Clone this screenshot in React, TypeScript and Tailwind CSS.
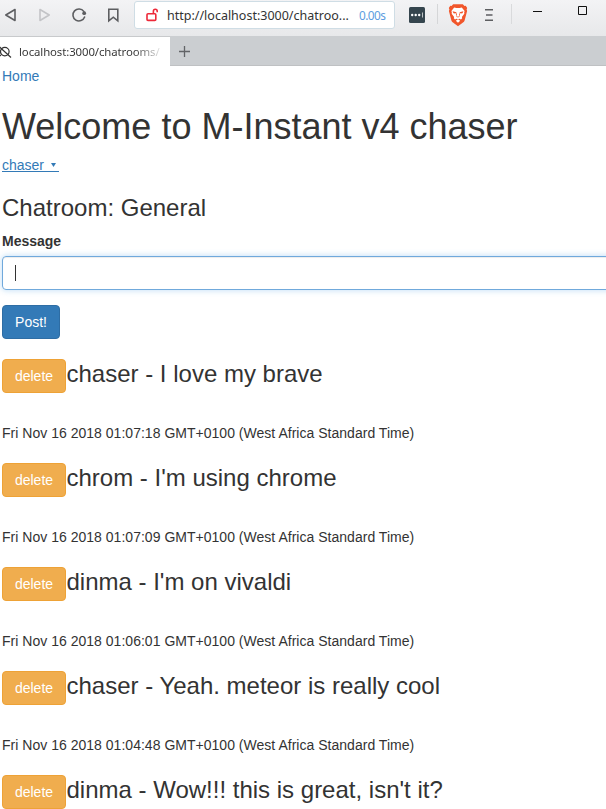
import React from "react";

const messages = [
  { text: "chaser - I love my brave", date: "Fri Nov 16 2018 01:07:18 GMT+0100 (West Africa Standard Time)" },
  { text: "chrom - I'm using chrome", date: "Fri Nov 16 2018 01:07:09 GMT+0100 (West Africa Standard Time)" },
  { text: "dinma - I'm on vivaldi", date: "Fri Nov 16 2018 01:06:01 GMT+0100 (West Africa Standard Time)" },
  { text: "chaser - Yeah. meteor is really cool", date: "Fri Nov 16 2018 01:04:48 GMT+0100 (West Africa Standard Time)" },
  { text: "dinma - Wow!!! this is great, isn't it?", date: "" },
];

function BraveLion() {
  return (
    <svg className="ml-[10px] mt-[3px] h-6 w-5 shrink-0" viewBox="0 0 20 24">
      <path
        d="M5.2 1.2h9.6l1.7 1.7 1.2-.1 1.5 2.1-.6 1.5.5 1.6-2.5 9.4c-.3 1-.8 1.6-1.6 2.2L10 23.2l-5-3.6c-.8-.6-1.3-1.2-1.6-2.2L.9 8l.5-1.6-.6-1.5 1.5-2.1 1.2.1z"
        fill="#f1562b"
      />
      <path
        d="M6.2 4.6l2.2.5h3.2l2.2-.5 2.8 3.3-.4 1.3.1 1.5-2.4 3.2.3 1.3-1.2 1.2-1.6-.7-1.4.6 2.2 1.5-2.2 1.9-2.2-1.9 2.2-1.5-1.4-.6-1.6.7-1.2-1.2.3-1.3-2.4-3.2.1-1.5-.4-1.3z"
        fill="#fff"
      />
      <path
        d="M4.6 8.3l3.9.9-1 1.4-2-.3zM15.4 8.3l-3.9.9 1 1.4 2-.3zM8.5 9.2l-.6 2 .6 2.6 1.5.8 1.5-.8.6-2-.6-2.6-.4 2.8.4 1.1-1.5.6-1.5-.6.4-1.1z"
        fill="#f1562b"
      />
    </svg>
  );
}

function Toolbar() {
  return (
    <div className="flex h-9 bg-linear-to-b from-[#f3f3f5] to-[#e7e8ea]">
      <svg className="h-9 w-[134px] shrink-0" viewBox="0 0 134 36" fill="none" stroke="#5d5e61" strokeWidth="1.6" strokeLinejoin="round" strokeLinecap="round">
        <path d="M15 9.5v11L5.8 15z" />
        <path d="M40 9.5v11l9.2-5.5z" stroke="#c3c4c7" />
        <path d="M83.8 11.4a6 6 0 1 0 .8 5.6" />
        <circle cx="84.2" cy="13.2" r="1.9" fill="#5d5e61" stroke="none" />
        <path d="M108.8 9.2h9v11.6l-4.5-3.6-4.5 3.6z" strokeLinejoin="miter" />
      </svg>
      <div className="mt-px flex h-7 w-[261px] shrink-0 items-center rounded-[3px] border border-[#cfdde5] bg-white font-['Noto_Sans',sans-serif]">
        <svg className="ml-[11px] h-4 w-4 shrink-0" viewBox="0 0 16 16" fill="none" stroke="#ed2939" strokeWidth="1.6">
          <rect x="1" y="6.8" width="8.8" height="6.6" rx="1" />
          <path d="M7.4 6.8V4.2a1.9 1.9 0 0 1 3.8 0v1.1" />
        </svg>
        <span className="ml-[5px] w-[184px] shrink-0 whitespace-nowrap pt-px text-[12.5px] text-[#333]">http://localhost:3000/chatroo...</span>
        <span className="ml-[8px] whitespace-nowrap text-[11.8px] tracking-[-0.55px] text-[#5c9de0]">0.00s</span>
      </div>
      <svg className="h-9 w-[42px] shrink-0" viewBox="395 0 42 36">
        <rect x="409" y="7" width="16" height="16" rx="1.5" fill="#35454e" />
        <g fill="#fff">
          <circle cx="412.2" cy="15" r="1.2" />
          <circle cx="415.7" cy="15" r="1.2" />
          <circle cx="419.2" cy="15" r="1.2" />
          <path d="M422 12.5h.9v5h-.9z" opacity=".75" />
        </g>
      </svg>
      <div className="mt-1 h-5 w-px shrink-0 bg-[#d5d6d8]" />
      <BraveLion />
      <svg className="h-9 w-[138px] shrink-0" viewBox="468 0 138 36" fill="none" stroke="#5d5e61" strokeWidth="1.4">
        <path d="M485 9.8h8M486 15h6.5M485 20.3h8" />
        <path d="M511.5 4v20" stroke="#d9dadc" strokeWidth="1" />
        <path d="M533 11.5h9" stroke="#111" strokeWidth="1" />
        <path d="M578.5 6.5h8v8h-8z" stroke="#111" strokeWidth="1" />
      </svg>
    </div>
  );
}

function TabBar() {
  return (
    <div className="flex h-[30px] border-b border-[#bfc1c3] bg-[#cbced1]">
      <div className="-mb-px flex h-[30px] w-[170px] shrink-0 items-center border-t border-[#c8cacc] bg-white">
        <svg className="h-4 w-3 shrink-0" viewBox="0 0 12 16" fill="none" stroke="#333" strokeWidth="1.2">
          <circle cx="4.8" cy="7.6" r="4.3" />
          <path d="M-1 2.5l12 11M1 11l-2 1.6" />
        </svg>
        <span className="ml-[7px] w-[141px] overflow-hidden whitespace-nowrap bg-linear-to-r from-[#333] from-82% to-[#33333322] bg-clip-text font-['Noto_Sans',sans-serif] text-[11.4px] tracking-[-0.1px] text-transparent">
          localhost:3000/chatrooms/
        </span>
      </div>
      <svg className="h-[29px] w-8" viewBox="0 0 32 29" fill="none" stroke="#626467" strokeWidth="1.3">
        <path d="M14.5 10v11M9 15.5h11" />
      </svg>
    </div>
  );
}

export default function App() {
  return (
    <div className="h-[809px] w-[606px] overflow-hidden bg-white font-['Liberation_Sans',Arial,sans-serif] text-sm leading-5 text-[#333]">
      <Toolbar />
      <TabBar />
      <main className="pl-0.5">
        <a className="block text-[#337ab7]">Home</a>
        <h1 className="mt-[21px] mb-2 text-4xl leading-[39.6px]">Welcome to M-Instant v4 chaser</h1>
        <a className="flex h-5 w-[57px] items-start text-[#337ab7]">
          <span className="flex h-[17px] w-full items-start border-b border-[#337ab7]">
            chaser
            <svg className="ml-[7px] mt-2 h-1 w-[5px]" viewBox="0 0 5 4">
              <path d="M0 0h5L2.5 4z" fill="#337ab7" />
            </svg>
          </span>
        </a>
        <h3 className="mt-5 text-2xl leading-[26.4px]">Chatroom: General</h3>
        <label className="mt-[10px] block font-bold">Message</label>
        <div className="mt-[5px] flex h-[34px] w-[640px] items-center rounded border border-[#70a9dc] pl-3 shadow-[inset_0_1px_1px_rgba(0,0,0,0.075),0_0_6px_rgba(102,175,233,0.45)]">
          <div className="h-4 w-px bg-[#333]" />
        </div>
        <button className="mt-[15px] block h-[34px] w-[58px] rounded border border-[#2e6da4] bg-[#337ab7] text-white">Post!</button>
        {messages.map((m) => (
          <section key={m.text} className="mt-5 h-[84px]">
            <div className="flex items-start">
              <button className="h-[34px] w-16 shrink-0 rounded border border-[#eea236] bg-[#f0ad4e] text-white">delete</button>
              <h3 className="whitespace-nowrap pt-0.5 pl-[0.5px] text-2xl leading-[26.4px]">{m.text}</h3>
            </div>
            <p className="mt-[30px] tracking-[0.02px]">{m.date}</p>
          </section>
        ))}
      </main>
    </div>
  );
}
